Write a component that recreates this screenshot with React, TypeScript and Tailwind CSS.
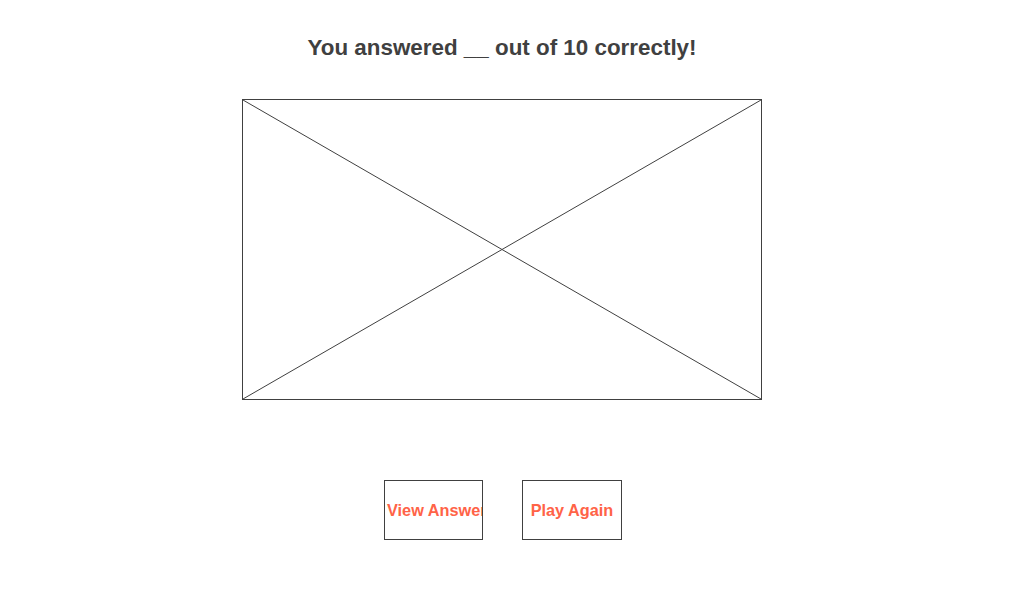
export default function App() {
  return (
    <div className="w-[1004px] h-[600px] bg-white flex flex-col items-center" style={{ fontFamily: '"Liberation Sans", Arial, sans-serif' }}>
      <h1 className="mt-[33px] text-[22.4px] leading-[30px] font-bold text-[#404040]">You answered __ out of 10 correctly!</h1>
      <div className="mt-[36px] w-[520px] h-[301px] border border-[#404040] relative">
        <svg className="absolute inset-0 w-full h-full" viewBox="0 0 518 299" preserveAspectRatio="none">
          <line x1="0" y1="0" x2="518" y2="299" stroke="#404040" strokeWidth="1" vectorEffect="non-scaling-stroke" />
          <line x1="518" y1="0" x2="0" y2="299" stroke="#404040" strokeWidth="1" vectorEffect="non-scaling-stroke" />
        </svg>
      </div>
      <div className="mt-[80px] flex gap-[39px] pl-[2px]">
        <div className="w-[99px] h-[60px] border border-[#404040] flex items-center overflow-hidden pl-[2px] pt-[1px] whitespace-nowrap text-[16.3px] font-bold text-[#ff6347]">View Answers</div>
        <div className="w-[100px] h-[60px] border border-[#404040] flex items-center justify-center overflow-hidden pt-[1px] whitespace-nowrap text-[16.3px] font-bold text-[#ff6347]">Play Again</div>
      </div>
    </div>
  );
}
